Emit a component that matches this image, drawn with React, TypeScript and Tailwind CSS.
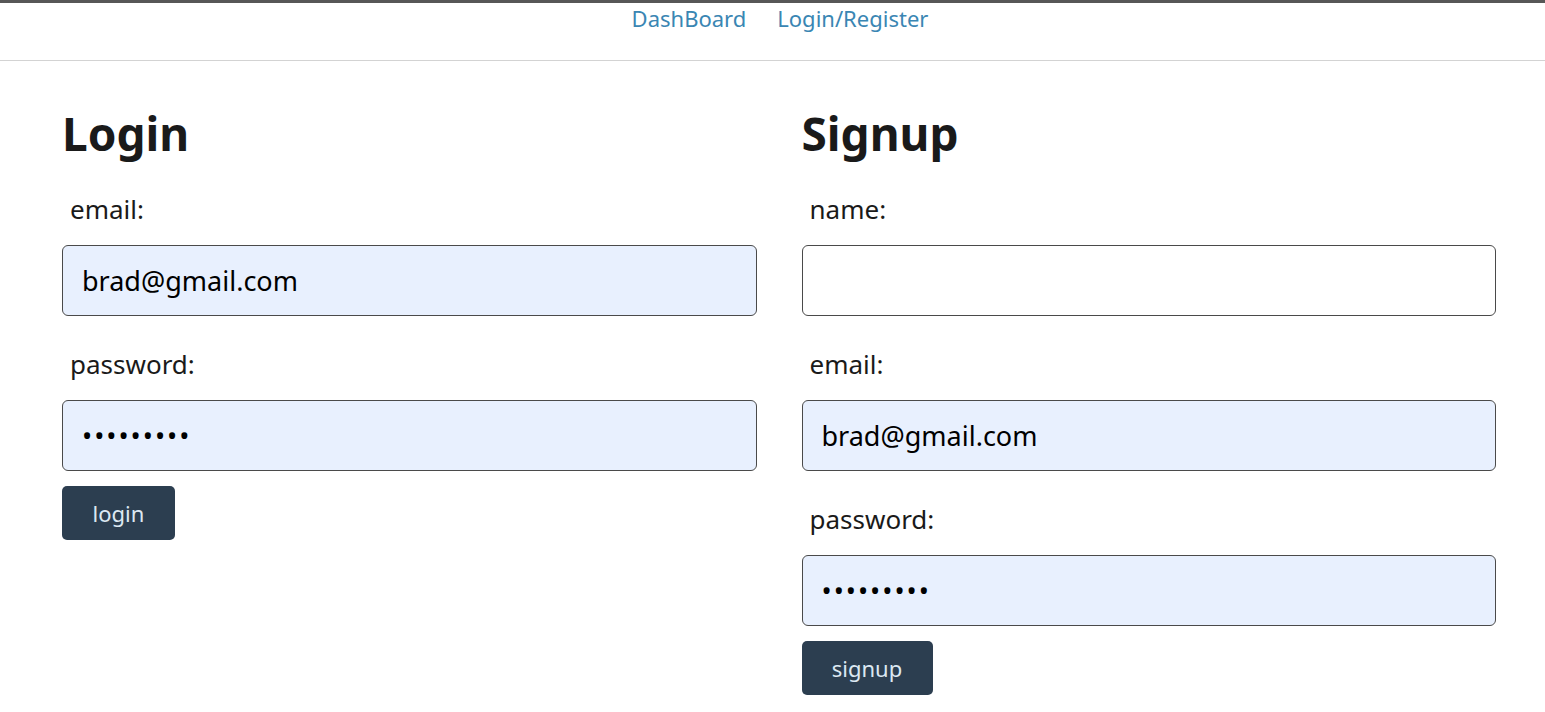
const font = { fontFamily: '"Noto Sans", "Open Sans", sans-serif' };

const Field = ({
  label,
  value,
  type = "text",
  filled = true,
}: {
  label: string;
  value: string;
  type?: string;
  filled?: boolean;
}) => (
  <div>
    <label className="block mt-[30px] mb-[18px] h-[36px] pl-2 text-[26px] leading-[36px] text-[#1a1a1a]">
      {label}
    </label>
    <input
      type={type}
      defaultValue={value}
      readOnly
      className={`block w-full h-[71px] rounded-[6px] border border-[#4a4a4a] px-[19px] text-[27px] text-black outline-none ${
        filled ? "bg-[#e8f0fe]" : "bg-white"
      } ${type === "password" ? "tracking-[2px]" : ""}`}
      style={font}
    />
  </div>
);

const SubmitButton = ({ text, width }: { text: string; width: string }) => (
  <button
    className={`mt-[15px] h-[54px] ${width} rounded-[5px] bg-[#2c3e50] text-[22px] text-[#dce8f2]`}
    style={font}
  >
    {text}
  </button>
);

export default function App() {
  return (
    <div className="min-h-screen bg-white" style={font}>
      <div className="h-[3px] bg-[#575757]" />
      <nav className="h-[58px] border-b border-[#d3d3d3] flex justify-center gap-[31px] pl-[15px] text-[22px] leading-[30px] text-[#3a86b3]">
        <a href="#">DashBoard</a>
        <a href="#">Login/Register</a>
      </nav>

      <main className="grid grid-cols-2 gap-[45px] pl-[62px] pr-[49px] pt-[44px]">
        <section>
          <h1 className="text-[46px] font-bold leading-[56px] text-[#1a1a1a]">Login</h1>
          <Field label="email:" value="brad@gmail.com" />
          <Field label="password:" value="123456789" type="password" />
          <SubmitButton text="login" width="w-[113px]" />
        </section>

        <section>
          <h1 className="text-[46px] font-bold leading-[56px] text-[#1a1a1a]">Signup</h1>
          <Field label="name:" value="" filled={false} />
          <Field label="email:" value="brad@gmail.com" />
          <Field label="password:" value="123456789" type="password" />
          <SubmitButton text="signup" width="w-[131px]" />
        </section>
      </main>
    </div>
  );
}
